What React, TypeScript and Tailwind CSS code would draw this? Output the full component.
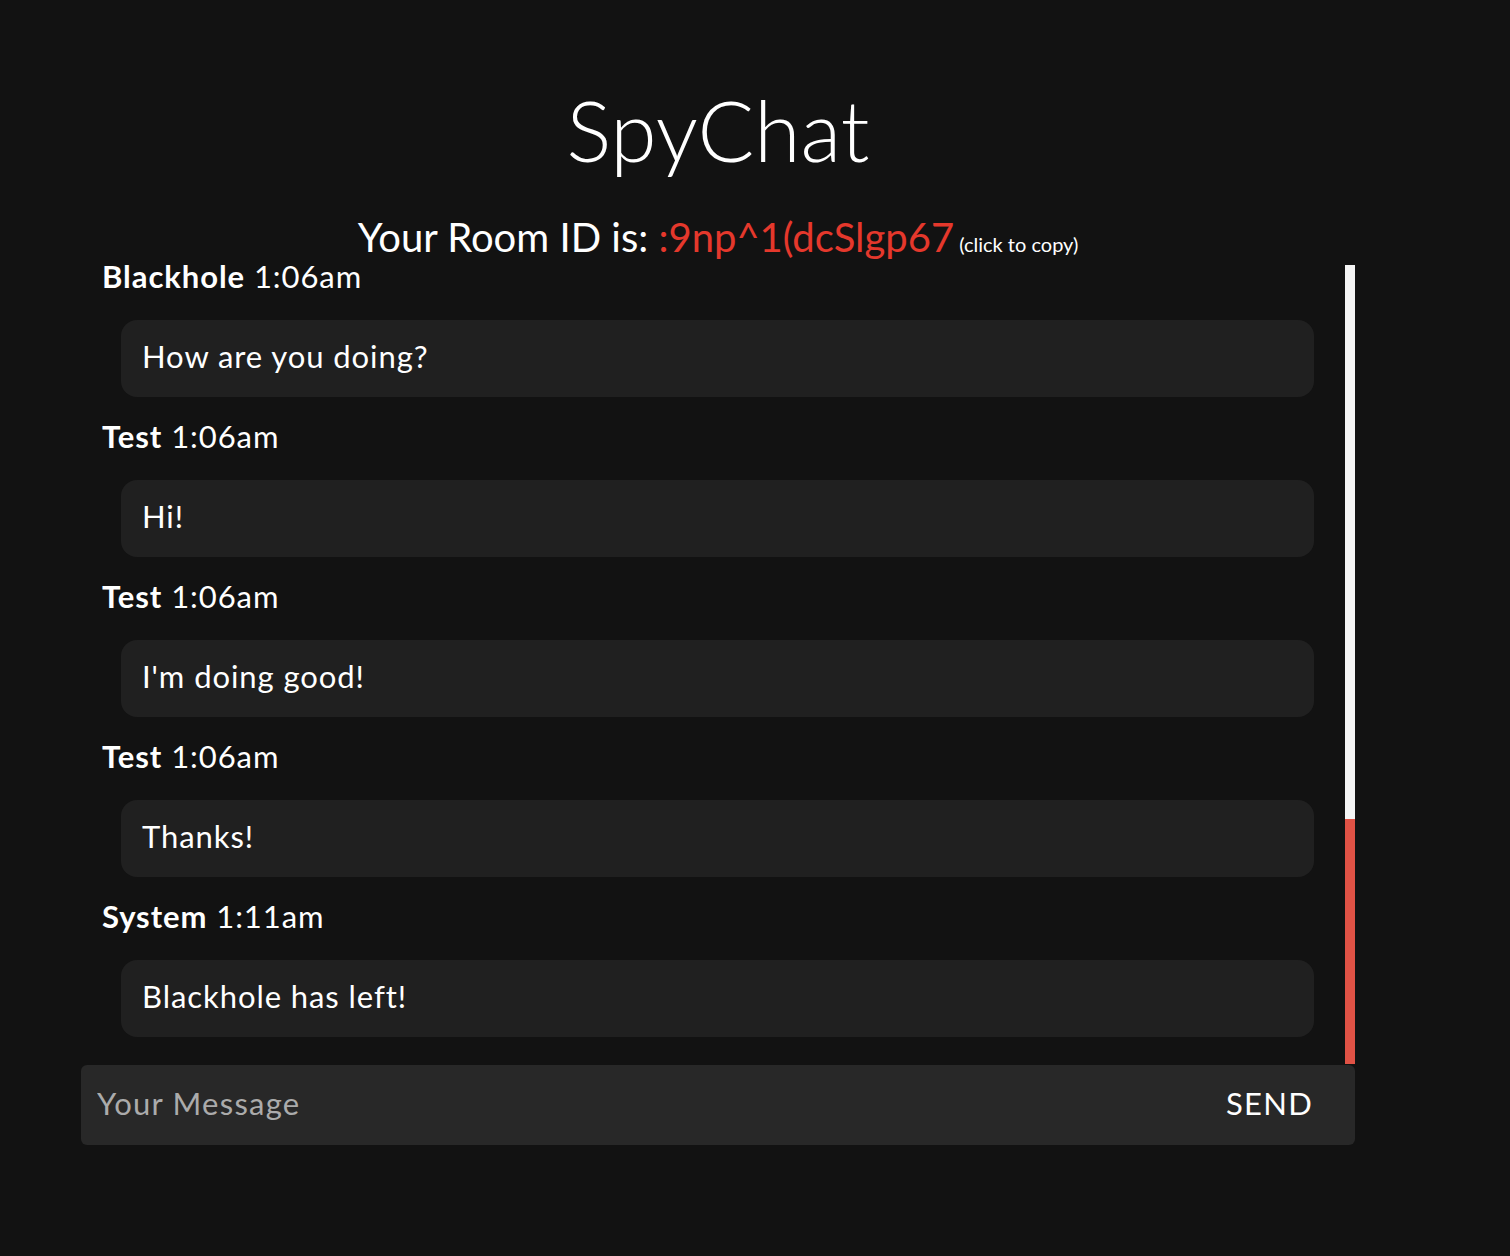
import React from "react"

const messages = [
    { name: "Blackhole", time: "1:06am", text: "How are you doing?" },
    { name: "Test", time: "1:06am", text: "Hi!" },
    { name: "Test", time: "1:06am", text: "I'm doing good!" },
    { name: "Test", time: "1:06am", text: "Thanks!" },
    { name: "System", time: "1:11am", text: "Blackhole has left!" },
]

export default function App() {
    return (
        <div className="min-h-screen bg-[#121212] text-white font-['Lato',sans-serif]">
            <div className="ml-[81px] w-[1274px]">
                <h1 className="pt-[88px] text-center text-[84px] font-light leading-none">SpyChat</h1>
                <p className="mt-[45px] text-center text-[40px] leading-none">
                    Your Room ID is: <span className="text-[#e5382c] cursor-pointer">:9np^1(dcSlgp67</span>
                    <span className="text-[20px]"> (click to copy)</span>
                </p>

                {/* Chat area */}
                <div className="flex h-[807px]">
                    <div className="flex-1 overflow-hidden">
                        {messages.map((m, i) => (
                            <div key={i} className="mb-[20px]">
                                <div className="pl-[21px] text-[31px] leading-[38px] tracking-[0.03em]">
                                    <span className="font-bold">{m.name}</span> {m.time}
                                </div>
                                <div className="mt-[25px] ml-[40px] mr-[31px] flex h-[77px] items-center rounded-2xl bg-[#202020] px-[21px] pb-1 text-[31px] tracking-[0.03em]">
                                    {m.text}
                                </div>
                            </div>
                        ))}
                    </div>
                    {/* Scrollbar */}
                    <div className="mt-2 flex w-[10px] flex-col">
                        <div className="h-[554px] bg-[#f5f5f5]" />
                        <div className="flex-1 bg-[#e05245]" />
                    </div>
                </div>

                {/* Input */}
                <div className="mt-px flex h-[80px] items-center rounded-md bg-[#282828] pl-4 pr-[42px] pb-1">
                    <input
                        className="flex-1 bg-transparent text-[31px] tracking-[0.04em] text-white outline-none placeholder:text-[#ababab]"
                        placeholder="Your Message"
                    />
                    <button className="text-[31px] tracking-[0.04em] text-white">SEND</button>
                </div>
            </div>
        </div>
    )
}
